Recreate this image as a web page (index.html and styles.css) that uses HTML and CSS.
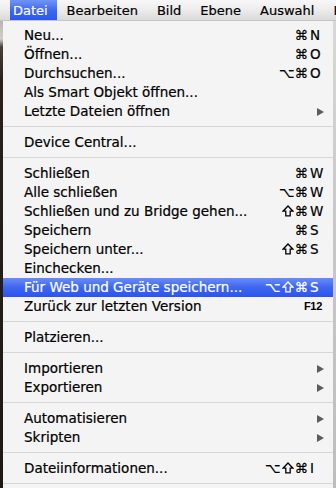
FILE: index.html
```html
<!DOCTYPE html>
<html lang="de">
<head>
<meta charset="utf-8">
<title>Datei-Menü</title>
<link rel="stylesheet" href="styles.css">
</head>
<body>
<div class="screen">
  <div class="menubar">
    <span class="mb-item active">Datei</span>
    <span class="mb-item">Bearbeiten</span>
    <span class="mb-item">Bild</span>
    <span class="mb-item">Ebene</span>
    <span class="mb-item">Auswahl</span>
    <span class="mb-item">Filter</span>
  </div>
  <div class="body">
    <div class="edge-left"></div>
    <div class="menu">
      <div class="item"><span class="label">Neu...</span><span class="sc"><span class="mods">⌘</span><span class="key">N</span></span></div>
      <div class="item"><span class="label">Öffnen...</span><span class="sc"><span class="mods">⌘</span><span class="key">O</span></span></div>
      <div class="item"><span class="label">Durchsuchen...</span><span class="sc"><span class="mods">⌥⌘</span><span class="key">O</span></span></div>
      <div class="item"><span class="label">Als Smart Objekt öffnen...</span></div>
      <div class="item"><span class="label">Letzte Dateien öffnen</span><span class="arrow"></span></div>
      <div class="sep"></div>
      <div class="item"><span class="label">Device Central...</span></div>
      <div class="sep"></div>
      <div class="item"><span class="label">Schließen</span><span class="sc"><span class="mods">⌘</span><span class="key">W</span></span></div>
      <div class="item"><span class="label">Alle schließen</span><span class="sc"><span class="mods">⌥⌘</span><span class="key">W</span></span></div>
      <div class="item"><span class="label">Schließen und zu Bridge gehen...</span><span class="sc"><span class="mods"><svg class="shift" viewBox="0 0 12 12" width="12" height="12"><polygon points="6,1 11,6.2 8.2,6.2 8.2,10.8 3.8,10.8 3.8,6.2 1,6.2"/></svg>⌘</span><span class="key">W</span></span></div>
      <div class="item"><span class="label">Speichern</span><span class="sc"><span class="mods">⌘</span><span class="key">S</span></span></div>
      <div class="item"><span class="label">Speichern unter...</span><span class="sc"><span class="mods"><svg class="shift" viewBox="0 0 12 12" width="12" height="12"><polygon points="6,1 11,6.2 8.2,6.2 8.2,10.8 3.8,10.8 3.8,6.2 1,6.2"/></svg>⌘</span><span class="key">S</span></span></div>
      <div class="item"><span class="label">Einchecken...</span></div>
      <div class="item hl"><span class="label">Für Web und Geräte speichern...</span><span class="sc"><span class="mods">⌥<svg class="shift" viewBox="0 0 12 12" width="12" height="12"><polygon points="6,1 11,6.2 8.2,6.2 8.2,10.8 3.8,10.8 3.8,6.2 1,6.2"/></svg>⌘</span><span class="key">S</span></span></div>
      <div class="item"><span class="label">Zurück zur letzten Version</span><span class="fkey">F12</span></div>
      <div class="sep"></div>
      <div class="item"><span class="label">Platzieren...</span></div>
      <div class="sep"></div>
      <div class="item"><span class="label">Importieren</span><span class="arrow"></span></div>
      <div class="item"><span class="label">Exportieren</span><span class="arrow"></span></div>
      <div class="sep"></div>
      <div class="item"><span class="label">Automatisieren</span><span class="arrow"></span></div>
      <div class="item"><span class="label">Skripten</span><span class="arrow"></span></div>
      <div class="sep"></div>
      <div class="item"><span class="label">Dateiinformationen...</span><span class="sc"><span class="mods">⌥<svg class="shift" viewBox="0 0 12 12" width="12" height="12"><polygon points="6,1 11,6.2 8.2,6.2 8.2,10.8 3.8,10.8 3.8,6.2 1,6.2"/></svg>⌘</span><span class="key">I</span></span></div>
      <div class="sep"></div>
    </div>
    <div class="edge-right"></div>
  </div>
</div>
</body>
</html>
```

FILE: styles.css
```css
html, body {
  margin: 0;
  padding: 0;
}
body {
  width: 336px;
  height: 488px;
  overflow: hidden;
  background: #2a2420;
  font-family: "DejaVu Sans", "Liberation Sans", sans-serif;
  color: #000;
}
.screen {
  display: flex;
  flex-direction: column;
  height: 488px;
}
.menubar {
  height: 21px;
  flex: none;
  display: flex;
  padding-left: 10px;
  background: linear-gradient(#f7f7f7, #ececec 50%, #dadada);
  border-bottom: 1px solid #c4c4c4;
  box-sizing: border-box;
  font-size: 13px;
  line-height: 19px;
  white-space: nowrap;
  overflow: hidden;
  -webkit-text-stroke: 0.2px currentColor;
}
.mb-item {
  padding: 1px 9.5px 0;
}
.mb-item.active {
  padding-left: 3px;
  padding-right: 9.3px;
  background: linear-gradient(#7095f7, #3a64f0 55%, #2c57ee);
  color: #fff;
}
.body {
  flex: 1;
  display: flex;
  min-height: 0;
}
.edge-left {
  width: 3px;
  flex: none;
  background: linear-gradient(#b9b5b0 0, #cfcfcf 18px, #4a3f36 26px, #2a211b 60px, #1e1814);
}
.edge-right {
  width: 3px;
  flex: none;
  background: linear-gradient(#d8d8d8, #c9c9c9 40%, #bdbdbd);
}
.menu {
  flex: 1;
  background: #f4f4f4;
  padding-top: 5px;
  font-size: 13.5px;
  white-space: nowrap;
  overflow: hidden;
  -webkit-text-stroke: 0.2px currentColor;
}
.item {
  height: 19px;
  line-height: 19px;
  display: flex;
  align-items: center;
  padding-left: 21px;
  padding-right: 9px;
}
.label {
  flex: 1;
}
.sc {
  display: flex;
  align-items: center;
}
.mods {
  display: inline-flex;
  align-items: center;
  margin-right: 2px;
}
.shift {
  display: block;
  margin: 0 1px 1px;
  fill: none;
  stroke: currentColor;
  stroke-width: 1.3;
  stroke-linejoin: miter;
}
.key {
  width: 14px;
}
.fkey {
  font-family: "Liberation Sans", sans-serif;
  font-weight: bold;
  font-size: 11px;
  letter-spacing: -0.3px;
  margin-right: 2px;
  -webkit-text-stroke: 0;
}
.arrow {
  width: 0;
  height: 0;
  border-left: 7px solid #5c5c5c;
  border-top: 4.5px solid transparent;
  border-bottom: 4.5px solid transparent;
}
.item.hl {
  background: linear-gradient(#6a8cf6, #3e66f1 50%, #2a55ee);
  color: #fff;
}
.sep {
  height: 1px;
  margin: 5px 0 6px;
  background: #d6d6d6;
}
```
